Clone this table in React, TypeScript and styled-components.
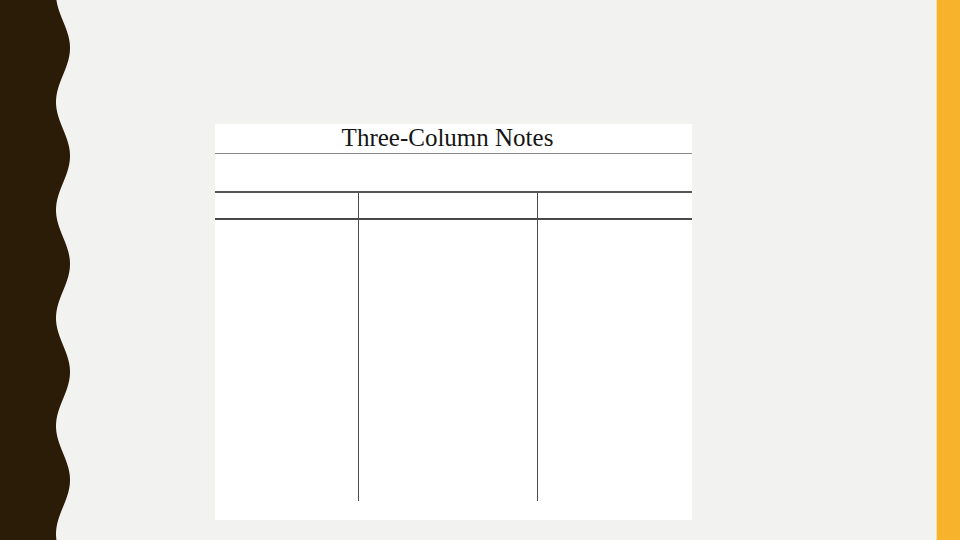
import React from "react";
import styled, { createGlobalStyle } from "styled-components";

const Global = createGlobalStyle`
  html, body { margin: 0; padding: 0; background: #f2f2f0; }
  body { font-family: "Liberation Serif", serif; }
`;

const Slide = styled.div`
  width: 960px;
  height: 540px;
  display: flex;
  background: #f2f2f0;
  overflow: hidden;
`;

const WaveBand = styled.svg`
  flex: 0 0 72px;
  display: block;
`;

const Main = styled.main`
  flex: 1;
  padding: 124px 0 0 143px;
`;

const AccentBar = styled.div`
  flex: 0 0 23px;
  background: #f6b32b;
  border-left: 1px solid #f7e3a6;
`;

const Sheet = styled.section`
  width: 477px;
  height: 396px;
  background: #ffffff;
  display: flex;
  flex-direction: column;
`;

const Title = styled.h1`
  margin: 0;
  height: 30px;
  box-sizing: border-box;
  padding: 1px 12px 0 0;
  font-family: "Liberation Serif", "Times New Roman", serif;
  font-weight: normal;
  font-size: 25px;
  line-height: 25px;
  color: #151515;
  text-align: center;
  border-bottom: 1.5px solid #8a8a8a;
`;

const Spacer = styled.div`
  height: 37px;
`;

const Table = styled.div`
  display: grid;
  grid-template-columns: 143px 179px 155px;
  grid-template-rows: 27px 281px;
  border-top: 2px solid #555;
`;

const Cell = styled.div<{ $first?: boolean; $head?: boolean }>`
  border-left: ${(p) => (p.$first ? "none" : "1.5px solid #4a4a4a")};
  border-bottom: ${(p) => (p.$head ? "2px solid #4a4a4a" : "none")};
  box-sizing: border-box;
`;

function wavePath(): string {
  const pts: string[] = [];
  for (let y = 0; y <= 540; y += 2) {
    const x = 63 - 7 * Math.cos((2 * Math.PI * (y + 6)) / 108);
    pts.push(`${x.toFixed(2)},${y}`);
  }
  return `M0,0 L${pts.join(" L")} L0,540 Z`;
}

export default function App() {
  const d = wavePath();
  return (
    <>
      <Global />
      <Slide>
        <WaveBand width="72" height="540" viewBox="0 0 72 540">
          <path d={d} fill="#2a1c07" />
        </WaveBand>
        <Main>
          <Sheet>
            <Title>Three-Column Notes</Title>
            <Spacer />
            <Table>
              <Cell $first $head />
              <Cell $head />
              <Cell $head />
              <Cell $first />
              <Cell />
              <Cell />
            </Table>
          </Sheet>
        </Main>
        <AccentBar />
      </Slide>
    </>
  );
}
